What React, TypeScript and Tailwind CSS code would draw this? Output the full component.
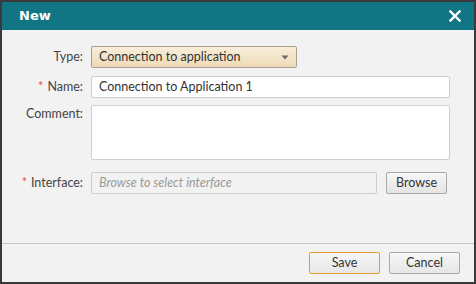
import React from "react";

const FONT = "font-['Lato','Noto_Sans',sans-serif]";

function Label({ text, required, top }: { text: string; required?: boolean; top?: boolean }) {
  return (
    <div className={`flex justify-end gap-[4px] text-[12.5px] text-[#444] ${top ? "items-start" : "items-center"}`}>
      {required && <span className="text-[#d9534f]">*</span>}
      <span>{text}</span>
    </div>
  );
}

export default function App() {
  return (
    <div className={`flex h-[284px] w-[476px] flex-col border-2 border-[#3a3a3a] bg-[#f2f2f2] ${FONT}`}>
      <div className="flex h-[28px] items-center justify-between bg-[#127583] pr-[13px] pl-[17px]">
        <span className="font-['DejaVu_Sans',sans-serif] text-[13px] font-bold text-white">New</span>
        <svg width="12" height="12" viewBox="0 0 12 12" className="text-white">
          <path d="M1.5 1.5 L10.5 10.5 M10.5 1.5 L1.5 10.5" stroke="currentColor" strokeWidth="2.4" strokeLinecap="square" />
        </svg>
      </div>

      <div className="grid flex-1 grid-cols-[81px_1fr] content-start gap-x-[8px] pt-[16px] pr-[24px]">
        <Label text="Type:" />
        <div className="flex">
          <div className="flex h-[22px] w-[206px] items-center justify-between rounded-[2px] border border-[#a99f8e] bg-gradient-to-b from-[#f9eedb] to-[#eedab6] pr-[7px] pl-[7px] text-[12.5px] text-[#333]">
            <span>Connection to application</span>
            <svg width="8" height="5" viewBox="0 0 8 5">
              <path d="M0.5 0.5 L7.5 0.5 L4 4.5 Z" fill="#6b6b6b" />
            </svg>
          </div>
        </div>

        <div className="mt-[8px] flex justify-end">
          <Label text="Name:" required />
        </div>
        <div className="mt-[8px] flex h-[22px] items-center rounded-[2px] border border-[#cfcfcf] bg-white pl-[7px] text-[12.5px] text-[#333]">
          Connection to Application 1
        </div>

        <div className="mt-[7px]">
          <Label text="Comment:" top />
        </div>
        <div className="mt-[7px] h-[55px] rounded-[2px] border border-[#cfcfcf] bg-white" />

        <div className="mt-[12px] flex justify-end">
          <Label text="Interface:" required />
        </div>
        <div className="mt-[12px] flex gap-[9px] pr-[3px]">
          <div className="flex h-[22px] flex-1 items-center rounded-[2px] border border-[#cfcfcf] bg-[#f2f2f2] pl-[7px] text-[12.5px] text-[#9a9a9a] italic">
            Browse to select interface
          </div>
          <button className="h-[22px] w-[61px] rounded-[2px] border border-[#a9a9a9] bg-gradient-to-b from-[#f7f7f7] to-[#e4e4e4] text-[12.5px] text-[#333]">
            Browse
          </button>
        </div>
      </div>

      <div className="flex h-[39px] items-center justify-end gap-[9px] border-t border-[#c6c6c6] pr-[14px]">
        <button className="h-[22px] w-[71px] rounded-[2px] border border-[#e59a2f] bg-gradient-to-b from-[#f7f7f7] to-[#e6e6e6] text-[12.5px] text-[#333]">
          Save
        </button>
        <button className="h-[22px] w-[71px] rounded-[2px] border border-[#a9a9a9] bg-gradient-to-b from-[#f7f7f7] to-[#e6e6e6] text-[12.5px] text-[#333]">
          Cancel
        </button>
      </div>
    </div>
  );
}
